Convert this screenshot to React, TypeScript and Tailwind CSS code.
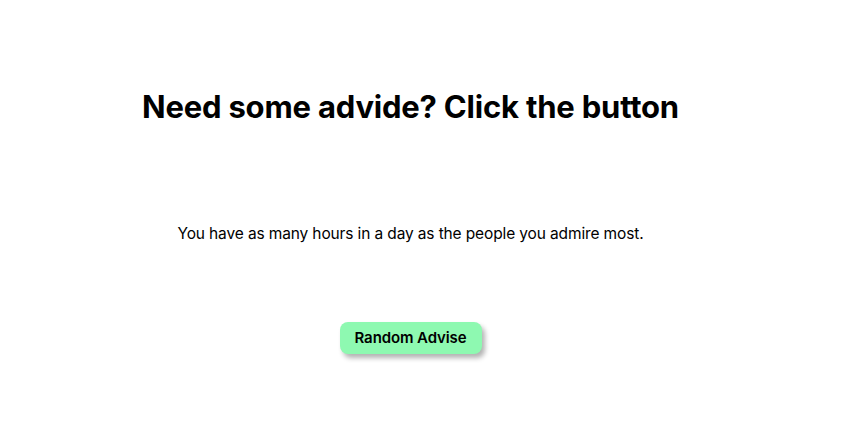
import React from "react";

const App = () => {
  return (
    <div className="min-h-screen bg-white font-['Inter',sans-serif] text-black">
      <div className="w-[821px] flex flex-col items-center">
        <h1 className="mt-[87px] text-[31px] font-bold leading-[40px] tracking-[-0.2px]">
          Need some advide? Click the button
        </h1>
        <p className="mt-[95px] text-[15.5px] leading-6 tracking-[-0.13px]">
          You have as many hours in a day as the people you admire most.
        </p>
        <button className="mt-[76px] h-8 px-[15px] rounded-lg bg-[#8ef9b1] text-[15px] font-semibold tracking-[-0.1px] shadow-[3px_4px_5px_rgba(0,0,0,0.3)]">
          Random Advise
        </button>
      </div>
    </div>
  );
};

export default App;
